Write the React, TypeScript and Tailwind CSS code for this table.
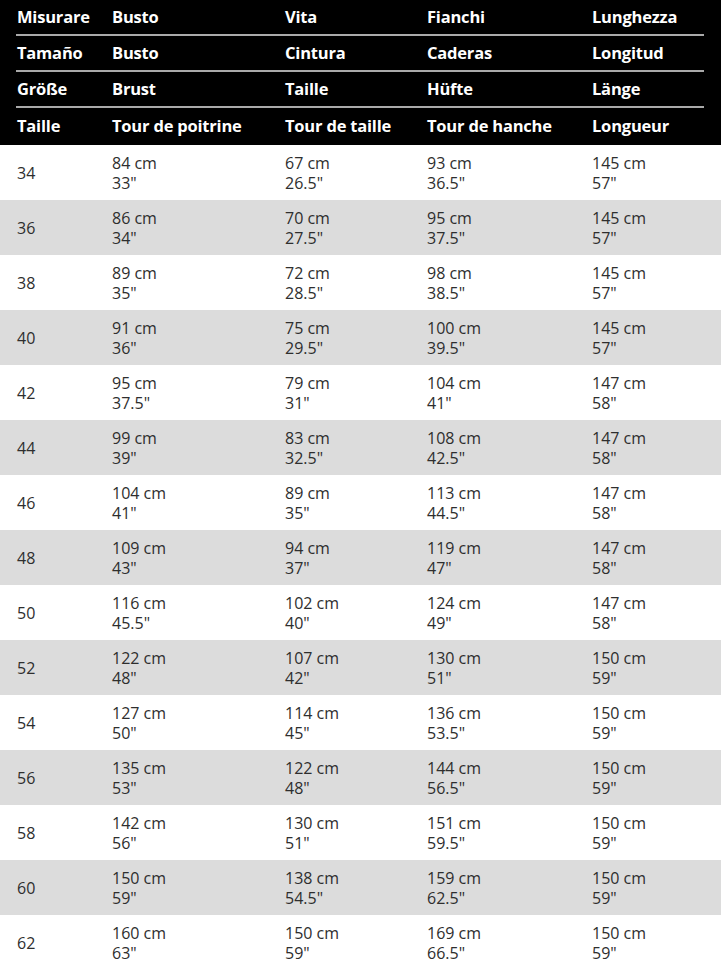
const headers = [
  ["Misurare", "Busto", "Vita", "Fianchi", "Lunghezza"],
  ["Tamaño", "Busto", "Cintura", "Caderas", "Longitud"],
  ["Größe", "Brust", "Taille", "Hüfte", "Länge"],
  ["Taille", "Tour de poitrine", "Tour de taille", "Tour de hanche", "Longueur"],
];

const rows: [string, string, string, string, string, string, string, string, string][] = [
  ["34", "84 cm", '33"', "67 cm", '26.5"', "93 cm", '36.5"', "145 cm", '57"'],
  ["36", "86 cm", '34"', "70 cm", '27.5"', "95 cm", '37.5"', "145 cm", '57"'],
  ["38", "89 cm", '35"', "72 cm", '28.5"', "98 cm", '38.5"', "145 cm", '57"'],
  ["40", "91 cm", '36"', "75 cm", '29.5"', "100 cm", '39.5"', "145 cm", '57"'],
  ["42", "95 cm", '37.5"', "79 cm", '31"', "104 cm", '41"', "147 cm", '58"'],
  ["44", "99 cm", '39"', "83 cm", '32.5"', "108 cm", '42.5"', "147 cm", '58"'],
  ["46", "104 cm", '41"', "89 cm", '35"', "113 cm", '44.5"', "147 cm", '58"'],
  ["48", "109 cm", '43"', "94 cm", '37"', "119 cm", '47"', "147 cm", '58"'],
  ["50", "116 cm", '45.5"', "102 cm", '40"', "124 cm", '49"', "147 cm", '58"'],
  ["52", "122 cm", '48"', "107 cm", '42"', "130 cm", '51"', "150 cm", '59"'],
  ["54", "127 cm", '50"', "114 cm", '45"', "136 cm", '53.5"', "150 cm", '59"'],
  ["56", "135 cm", '53"', "122 cm", '48"', "144 cm", '56.5"', "150 cm", '59"'],
  ["58", "142 cm", '56"', "130 cm", '51"', "151 cm", '59.5"', "150 cm", '59"'],
  ["60", "150 cm", '59"', "138 cm", '54.5"', "159 cm", '62.5"', "150 cm", '59"'],
  ["62", "160 cm", '63"', "150 cm", '59"', "169 cm", '66.5"', "150 cm", '59"'],
];

const cols = "grid grid-cols-[95px_173px_142px_165px_1fr]";

export default function App() {
  return (
    <div className="w-[721px] h-[960px] overflow-hidden bg-white font-['Open_Sans',sans-serif]">
      <div className="bg-black pl-[16px] pr-[17px] pt-0">
        {headers.map((h, i) => (
          <div
            key={i}
            className={`${cols} items-center ${i < 3 ? "h-[36px] border-b-2 border-[#a9a9a9]" : "h-[37px]"}`}
          >
            {h.map((t, j) => (
              <div key={j} className="pl-[1px] text-white font-bold text-[16.5px] tracking-[-0.2px] whitespace-nowrap">
                {t}
              </div>
            ))}
          </div>
        ))}
      </div>
      {rows.map((r, i) => (
        <div
          key={r[0]}
          className={`${cols} pl-[17px] h-[55px] items-center text-[16px] text-[#2e2e2e] ${i % 2 === 1 ? "bg-[#dcdcdc]" : "bg-white"}`}
        >
          <div>{r[0]}</div>
          {[1, 3, 5, 7].map((k) => (
            <div key={k} className="leading-[20px]">
              <div>{r[k]}</div>
              <div>{r[k + 1]}</div>
            </div>
          ))}
        </div>
      ))}
    </div>
  );
}
